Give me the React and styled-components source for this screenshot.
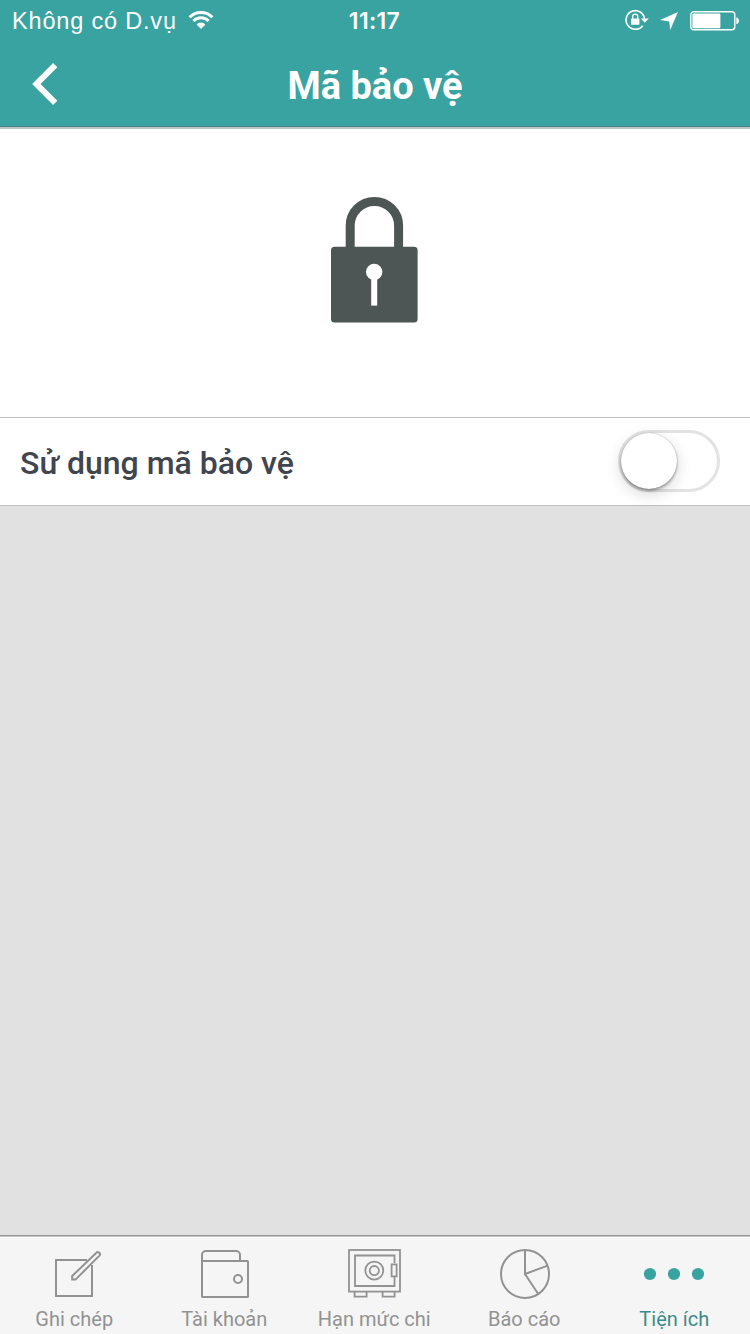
import React, { useState } from 'react';
import styled, { createGlobalStyle } from 'styled-components';

const GlobalStyle = createGlobalStyle`
  * {
    box-sizing: border-box;
  }
  body {
    margin: 0;
    font-family: Roboto, 'Liberation Sans', sans-serif;
  }
  button {
    border: 0;
    padding: 0;
    background: none;
    font: inherit;
    color: inherit;
  }
  svg {
    display: block;
  }
`;

const Screen = styled.div`
  width: 750px;
  height: 1334px;
  display: flex;
  flex-direction: column;
  background: #e1e1e1;
  overflow: hidden;
`;

////////////////////////////////////////////////////////////////////////////////////////////////////////////////////////

const Header = styled.header`
  height: 129px;
  flex: none;
  color: #fff;
  background: #38a3a0;
  border-bottom: 2px solid #bfc6c6;
  box-shadow: inset 0 -1px 0 #45807e;
`;

const StatusBar = styled.div`
  height: 41px;
  padding: 1px 10px 0 12px;
  display: grid;
  grid-template-columns: 1fr auto 1fr;
  align-items: center;
  font-family: 'Liberation Sans', sans-serif;
`;

const Carrier = styled.div`
  display: flex;
  align-items: center;
  gap: 11px;
  font-size: 23.5px;
  line-height: 40px;
  letter-spacing: 0.82px;
  white-space: nowrap;
  svg {
    margin-bottom: 2px;
  }
`;

const Clock = styled.div`
  font-family: Inter, sans-serif;
  font-size: 23px;
  font-weight: 600;
  line-height: 40px;
  letter-spacing: 0.3px;
  padding-right: 3px;
`;

const StatusIcons = styled.div`
  display: flex;
  justify-content: flex-end;
  align-items: center;
  gap: 11px;
  svg:first-child {
    margin: 0 -1px 2px 0;
  }
`;

const TitleBar = styled.div`
  height: 86px;
  display: grid;
  grid-template-columns: 90px 1fr 90px;
  align-items: center;
`;

const Title = styled.h1`
  margin: 0;
  padding-top: 4px;
  font-size: 38px;
  font-weight: 700;
  line-height: 80px;
  text-align: center;
`;

const BackButton = styled.button`
  width: 90px;
  height: 86px;
`;

////////////////////////////////////////////////////////////////////////////////////////////////////////////////////////

const LockPanel = styled.section`
  height: 289px;
  flex: none;
  padding-top: 66px;
  display: flex;
  justify-content: center;
  background: #fff;
  border-bottom: 1px solid #c0c0c0;
`;

const SettingRow = styled.section`
  height: 88px;
  flex: none;
  padding: 0 30px 2px 20px;
  display: flex;
  align-items: center;
  justify-content: space-between;
  background: #fff;
  border-bottom: 1px solid #c0c0c0;
`;

const SettingLabel = styled.span`
  padding-top: 5px;
  font-size: 32px;
  font-weight: 500;
  line-height: 40px;
  color: #41454e;
`;

const Switch = styled.button`
  width: 102px;
  height: 62px;
  display: flex;
  align-items: center;
  justify-content: ${p => (p.$on ? 'flex-end' : 'flex-start')};
  border: 3px solid ${p => (p.$on ? '#38a3a0' : '#e3e3e3')};
  border-radius: 31px;
  background: ${p => (p.$on ? '#38a3a0' : '#fff')};
`;

const Knob = styled.span`
  width: 56px;
  height: 56px;
  flex: none;
  border-radius: 50%;
  background: #fff;
  box-shadow: 0 0 1px rgba(0, 0, 0, 0.35), 0 2px 3px rgba(0, 0, 0, 0.32), 0 5px 16px rgba(0, 0, 0, 0.16);
`;

////////////////////////////////////////////////////////////////////////////////////////////////////////////////////////

const TabBar = styled.nav`
  height: 99px;
  margin-top: auto;
  flex: none;
  display: grid;
  grid-template-columns: repeat(5, 1fr);
  background: #f5f5f5;
  border-top: 1px solid #969696;
  box-shadow: inset 0 1px 0 #c4c4c4, inset 0 2px 0 #fdfdfd;
`;

const Tab = styled.button`
  display: flex;
  flex-direction: column;
  align-items: center;
  padding-top: 9px;
  color: ${p => (p.$active ? '#38a3a0' : '#929292')};
`;

const TabLabel = styled.span`
  margin-top: 2px;
  padding-right: 1.5px;
  font-size: 20px;
  line-height: 24px;
  color: ${p => (p.$active ? '#3d8c87' : '#929292')};
`;

////////////////////////////////////////////////////////////////////////////////////////////////////////////////////////

const WifiIcon = () => (
  <svg width="26" height="20" viewBox="0 0 26 20" fill="none" stroke="#fff" strokeWidth="3">
    <path d="M1.6 7.2a16.2 16.2 0 0 1 22.8 0" />
    <path d="M5.4 11a10.8 10.8 0 0 1 15.2 0" />
    <path d="M13 19l-4.4-4.6a6.3 6.3 0 0 1 8.8 0z" fill="#fff" stroke="none" />
  </svg>
);

const RotationLockIcon = () => (
  <svg width="24" height="22" viewBox="0 0 24 22" fill="none" stroke="#fff">
    <path d="M17.7 16.7A9.3 9.3 0 1 1 19.6 10" strokeWidth="1.6" />
    <path d="M15.8 9.4h8l-4 4.4z" fill="#fff" stroke="none" />
    <rect x="6" y="9.4" width="8.4" height="6.4" rx="0.6" fill="#fff" stroke="none" />
    <path d="M7.7 10V7.6a2.5 2.5 0 0 1 5 0V10" strokeWidth="1.4" />
  </svg>
);

const LocationIcon = () => (
  <svg width="20" height="20" viewBox="0 0 20 20" fill="#fff">
    <path d="M19 1L11.2 19 10.2 10.6 1 9z" />
  </svg>
);

const BatteryIcon = () => (
  <svg width="50" height="20" viewBox="0 0 50 20">
    <rect x="0.8" y="0.8" width="44" height="18" rx="3" fill="none" stroke="#fff" strokeWidth="1.4" />
    <rect x="2.4" y="2.4" width="28" height="14.8" rx="1.2" fill="#fff" />
    <path d="M46.3 6.3c3.6 1 3.6 6 0 7z" fill="#fff" />
  </svg>
);

const BackIcon = () => (
  <svg width="90" height="86" viewBox="0 41 90 86" fill="none" stroke="#fff" strokeWidth="6">
    <path d="M55.2 65.2L36.4 84l18.8 18.8" />
  </svg>
);

const LockIcon = () => (
  <svg width="90" height="130" viewBox="330 195 90 130">
    <path d="M350.2 250v-24.4a24 24 0 0 1 48.4 0V250" fill="none" stroke="#4d5654" strokeWidth="9" />
    <rect x="331" y="246.8" width="86.6" height="75.8" rx="3.5" fill="#4d5654" />
    <circle cx="374.2" cy="272" r="8.2" fill="#fff" />
    <rect x="371.2" y="276" width="6" height="29.6" fill="#fff" />
  </svg>
);

const NoteIcon = () => (
  <svg width="150" height="60" viewBox="0 1245 150 60" fill="none" stroke="currentColor" strokeWidth="2">
    <path d="M87 1260H56v36h36v-31" />
    <path d="M72.2 1279.6v-3.6l24.2-23.2a2 2 0 0 1 3 2.8L75.5 1279.6z" />
  </svg>
);

const WalletIcon = () => (
  <svg width="150" height="60" viewBox="150 1245 150 60" fill="none" stroke="currentColor" strokeWidth="2">
    <rect x="202" y="1261" width="46" height="36" rx="0.6" />
    <path d="M202 1261v-6a4 4 0 0 1 4-4h30a4 4 0 0 1 4 4v6" />
    <circle cx="238" cy="1279" r="4" />
  </svg>
);

const SafeIcon = () => (
  <svg width="150" height="60" viewBox="300 1245 150 60" fill="none" stroke="currentColor" strokeWidth="1.8">
    <rect x="349" y="1250" width="51" height="41.6" />
    <path d="M394.5 1263v-7.5H355V1286h39.5v-9" />
    <rect x="391.6" y="1264.4" width="5" height="12" />
    <circle cx="374.3" cy="1270.6" r="9" />
    <circle cx="374.3" cy="1270.6" r="4.6" />
    <path d="M354.6 1292v4.6h12V1292M382.6 1292v4.6h12V1292" />
  </svg>
);

const ChartIcon = () => (
  <svg width="150" height="60" viewBox="450 1245 150 60" fill="none" stroke="currentColor" strokeWidth="2">
    <circle cx="525" cy="1274" r="24" />
    <path d="M525 1250v24l22.6-8.4M525 1274l13.4 20.2" />
  </svg>
);

const MoreIcon = () => (
  <svg width="150" height="60" viewBox="600 1245 150 60" fill="currentColor">
    <circle cx="650" cy="1274" r="6.1" />
    <circle cx="674" cy="1274" r="6.1" />
    <circle cx="698" cy="1274" r="6.1" />
  </svg>
);

////////////////////////////////////////////////////////////////////////////////////////////////////////////////////////

const tabs = [
  { label: 'Ghi chép', icon: NoteIcon },
  { label: 'Tài khoản', icon: WalletIcon },
  { label: 'Hạn mức chi', icon: SafeIcon },
  { label: 'Báo cáo', icon: ChartIcon },
  { label: 'Tiện ích', icon: MoreIcon },
];

const App = () => {
  const [enabled, setEnabled] = useState(false);
  const [activeTab, setActiveTab] = useState(4);
  return (
    <Screen>
      <GlobalStyle />
      <Header>
        <StatusBar>
          <Carrier>
            <span>Không có D.vụ</span>
            <WifiIcon />
          </Carrier>
          <Clock>11:17</Clock>
          <StatusIcons>
            <RotationLockIcon />
            <LocationIcon />
            <BatteryIcon />
          </StatusIcons>
        </StatusBar>
        <TitleBar>
          <BackButton>
            <BackIcon />
          </BackButton>
          <Title>Mã bảo vệ</Title>
        </TitleBar>
      </Header>

      <LockPanel>
        <LockIcon />
      </LockPanel>

      <SettingRow>
        <SettingLabel>Sử dụng mã bảo vệ</SettingLabel>
        <Switch role="switch" aria-checked={enabled} $on={enabled} onClick={() => setEnabled(!enabled)}>
          <Knob />
        </Switch>
      </SettingRow>

      <TabBar>
        {tabs.map(({ label, icon: Icon }, i) => (
          <Tab key={label} $active={i === activeTab} onClick={() => setActiveTab(i)}>
            <Icon />
            <TabLabel $active={i === activeTab}>{label}</TabLabel>
          </Tab>
        ))}
      </TabBar>
    </Screen>
  );
};

export default App;
